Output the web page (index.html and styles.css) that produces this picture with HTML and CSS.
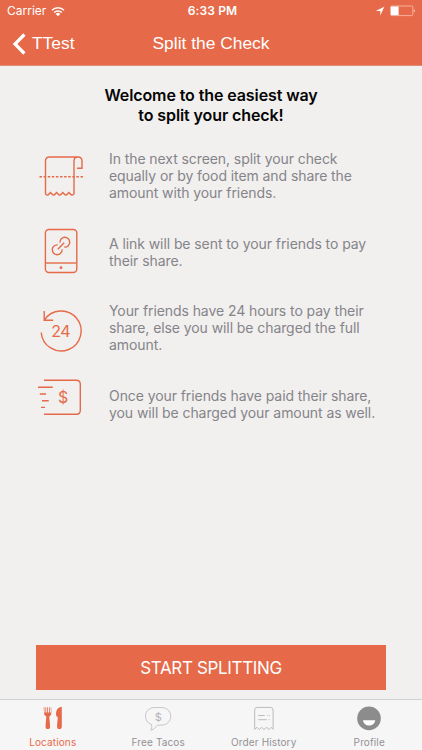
FILE: index.html
```html
<!DOCTYPE html>
<html lang="en">
<head>
  <meta charset="UTF-8" />
  <title>Split the Check</title>
  <meta name="viewport" content="width=device-width, initial-scale=1" />
  <link rel="stylesheet" href="styles.css">
</head>
<body>
  <header>
    <div class="status-bar">
      <div class="carrier">
        <span>Carrier</span>
        <svg width="14" height="11" viewBox="0 0 14 11" fill="none" stroke="#fff" stroke-width="1.5">
          <path d="M1 4.2a8.6 8.6 0 0 1 12 0M3.2 6.5a5.4 5.4 0 0 1 7.6 0" />
          <path d="M4.7 7.9a3.3 3.3 0 0 1 4.6 0L7 10.3Z" fill="#fff" stroke="none" />
        </svg>
      </div>
      <div class="time">6:33 PM</div>
      <div class="indicators">
        <svg width="10" height="10" viewBox="0 0 10 10" fill="#fff"><path d="M9.3.7 5.3 9.5V4.9H.7Z" /></svg>
        <svg width="26" height="12" viewBox="0 0 26 12">
          <rect x=".5" y="1" width="22.3" height="9.6" rx="1" fill="none" stroke="#f6c1b3" stroke-width=".8" />
          <rect x="1" y="1.5" width="7.6" height="8.6" fill="#fff" />
          <path d="M23.8 4v3.6q1.2-.5 1.2-1.8T23.8 4Z" fill="#f6c1b3" />
        </svg>
      </div>
    </div>
    <nav class="nav-bar">
      <a class="back">
        <svg width="14" height="22" viewBox="0 0 14 22" fill="none" stroke="#fff" stroke-width="3.2"><path d="M12.4 1.5 3 11l9.4 9.5" /></svg>
        <span>TTest</span>
      </a>
      <div class="nav-title">Split the Check</div>
    </nav>
  </header>

  <main>
    <h1>Welcome to the easiest way<br>to split your check!</h1>

    <div class="steps">
      <!-- receipt -->
      <div class="step">
        <svg class="step-icon" viewBox="0 0 70 76">
          <path d="M15.5 56V23q0-4 4-4H48q4 0 4 4v7.3H47M48 19q-4 0-4 4v33" />
          <path d="M15.5 56q2 2.2 3.6 0l1.3-1.4 1.5 1.4q1.7 2.2 3.3 0l1.4-1.4 1.4 1.4q1.7 2.2 3.4 0l1.4-1.4 1.4 1.4q1.7 2.2 3.3 0l1.4-1.4 1.4 1.4q1.6 2.2 3.7 0" />
          <path d="M9.5 38.8h44" stroke-dasharray="2.5 1.6" />
        </svg>
        <p>In the next screen, split your check equally or by food item and share the amount with your friends.</p>
      </div>

      <!-- phone with link -->
      <div class="step">
        <svg class="step-icon" viewBox="0 0 70 76">
          <rect x="15.4" y="15.5" width="31.4" height="43" rx="3.5" />
          <path d="M15.4 49h31.4" />
          <circle class="solid" cx="31" cy="53.7" r="1.4" />
          <g transform="translate(31 32) rotate(-45)">
            <path d="M-4.5 0h9" />
            <path d="M-1.6 3.1q-1.4 1.8-3.8 1.8a4.9 4.9 0 0 1 0-9.8q2.4 0 3.8 1.8M1.6-3.1Q3-4.9 5.4-4.9a4.9 4.9 0 0 1 0 9.8Q3 4.9 1.6 3.1" />
          </g>
        </svg>
        <p>A link will be sent to your friends to pay their share.</p>
      </div>

      <!-- 24 hours -->
      <div class="step">
        <svg class="step-icon" viewBox="0 0 70 76">
          <path d="M11.2 42.5A20 20 0 1 0 14.4 30" />
          <path d="M14.2 21v9.2h9" />
          <text x="30.7" y="47" font-size="16" letter-spacing="-.5">24</text>
        </svg>
        <p>Your friends have 24 hours to pay their share, else you will be charged the full amount.</p>
      </div>

      <!-- payment -->
      <div class="step">
        <svg class="step-icon" viewBox="0 0 70 76">
          <path d="M14 14.3h32.3q4 0 4 4v26q0 4-4 4H14" />
          <path d="M8 21.2h14.8M9.8 28h6.3M12 34.7h6.7M11 41.4h4" />
          <text x="33.2" y="37.3" font-size="16">$</text>
        </svg>
        <p>Once your friends have paid their share, you will be charged your amount as well.</p>
      </div>
    </div>

    <button>START SPLITTING</button>
  </main>

  <footer class="tab-bar">
    <a class="tab active">
      <svg width="28" height="28" viewBox="0 0 28 28">
        <path fill="currentColor" d="M4.6 3.2h.8v5.3h1V3.2h.8v5.3h1V3.2H9v5.3h1V3.2h.8v5.3h1V3.2h.5v6.3q0 2.2-2 3.1l.8 9.6q0 2.9-2.3 2.9t-2.3-2.9l.8-9.6q-2.2-.9-2.2-3.1Z" />
        <path fill="currentColor" d="M22.8 2.7v19.5q0 2.9-2.4 2.9T18 22.2l.8-8.6q-1.9-.9-1.9-3.6 0-6.2 5.9-7.3Z" />
      </svg>
      <span>Locations</span>
    </a>
    <a class="tab">
      <svg width="28" height="28" viewBox="0 0 28 28" fill="none" stroke="#c8c7c9">
        <path d="M10 3.5h8a8.7 8.7 0 0 1 0 17.6h-4.5q-2.5 4.2-6.7 5.2 1.5-3 .7-5.8A8.7 8.7 0 0 1 10 3.5Z" />
        <text x="14.3" y="16.5" font-size="11" fill="#b3b2b4" stroke="none" text-anchor="middle">$</text>
      </svg>
      <span>Free Tacos</span>
    </a>
    <a class="tab">
      <svg width="28" height="28" viewBox="0 0 28 28" fill="none" stroke="#bcbbbd">
        <path d="M4.7 25.3V6q0-2.6 2.6-2.6h13.2q2.6 0 2.6 2.6v19.3l-1.9-2-2.2 2.3-2.3-2.3-2.7 2.3-2.4-2.3-2.4 2.3L7 23.3Z" />
        <path d="M8.3 11.5h6.5M8.3 15.7h8.5M17.3 11.5h.9M18.8 11.5h.9M18.6 15.7h1" />
      </svg>
      <span>Order History</span>
    </a>
    <a class="tab">
      <svg width="28" height="28" viewBox="0 0 28 28">
        <circle cx="14" cy="14.4" r="11.8" fill="#8c8c8d" />
        <path d="M8 16.2h12.2a6.1 5.4 0 0 1-12.2 0Z" fill="#fff" />
      </svg>
      <span>Profile</span>
    </a>
  </footer>
</body>
</html>
```
FILE: styles.css
```css
* {
  box-sizing: border-box;
}
body {
  margin: 0;
  height: 750px;
  display: flex;
  flex-direction: column;
  font-family: Inter, sans-serif;
  background: #f1f0ee;
  overflow: hidden;
}
header {
  height: 66px;
  background: #e66a49;
  color: #fff;
  border-bottom: 1px solid #dc8c77;
}
.status-bar {
  display: grid;
  grid-template-columns: 1fr auto 1fr;
  align-items: center;
  height: 22px;
  padding: 0 6px 0 7px;
  font-size: 12px;
  line-height: 22px;
}
.carrier {
  display: flex;
  align-items: center;
  gap: 5px;
  letter-spacing: 0;
}
.time {
  padding-left: 2px;
  font-weight: 600;
  font-size: 12px;
  letter-spacing: 0.1px;
}
.indicators {
  display: flex;
  align-items: center;
  justify-content: flex-end;
  gap: 5px;
}
.nav-bar {
  display: grid;
  grid-template-columns: 1fr auto 1fr;
  align-items: center;
  height: 43px;
  padding: 0 12px;
  font-family: "Liberation Sans", Arial, sans-serif;
  font-size: 17.4px;
}
.back {
  display: flex;
  align-items: center;
  gap: 6px;
}
main {
  flex: 1;
  display: flex;
  flex-direction: column;
}
h1 {
  margin: 20px 0 13px;
  font-size: 16px;
  font-weight: 600;
  line-height: 19.5px;
  letter-spacing: -0.1px;
  text-align: center;
  color: #050505;
}
.step {
  display: flex;
  align-items: center;
  height: 76px;
  padding-left: 30px;
}
.step-icon {
  width: 70px;
  height: 76px;
  margin-right: 9px;
  fill: none;
  stroke: #e66a49;
  stroke-width: 1.4;
}
.step-icon text {
  fill: #e66a49;
  stroke: none;
  text-anchor: middle;
}
.step-icon .solid {
  fill: #e66a49;
  stroke: none;
}
.step p {
  width: 268px;
  margin: 0;
  padding-bottom: 1px;
  font-size: 14px;
  line-height: 17px;
  letter-spacing: -0.08px;
  color: #85848a;
}
button {
  height: 45px;
  margin: auto 36px 9px;
  padding: 0;
  border: none;
  background: #e66a49;
  color: #fff;
  font-family: inherit;
  font-size: 17px;
  letter-spacing: -0.35px;
}
.tab-bar {
  display: grid;
  grid-template-columns: repeat(4, 1fr);
  height: 51px;
  background: #f7f6f7;
  border-top: 1px solid #d3d2d3;
}
.tab {
  display: flex;
  flex-direction: column;
  align-items: center;
  padding-top: 4px;
  font-size: 10px;
  line-height: 12px;
  letter-spacing: 0.13px;
  color: #929194;
}
.tab svg {
  margin-bottom: 4px;
}
.tab.active {
  color: #e66a49;
}
```
